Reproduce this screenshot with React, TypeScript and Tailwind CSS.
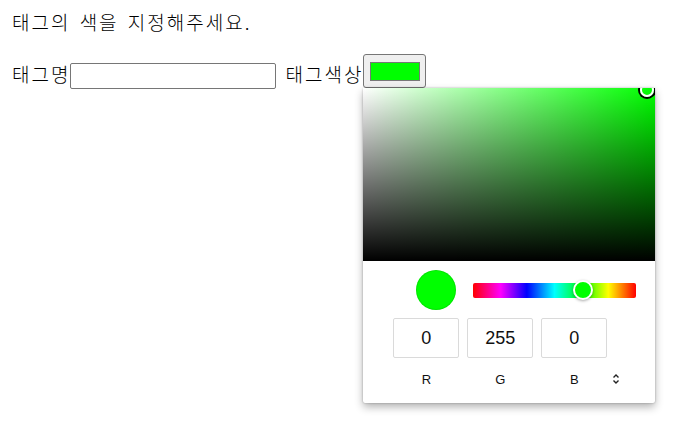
import React from "react";

const ColorPicker: React.FC = () => {
  return (
    <div className="absolute left-0 top-full z-10 w-[292px] rounded-[2px] bg-white shadow-[0_0_2px_rgba(0,0,0,0.3),0_4px_8px_rgba(0,0,0,0.3)] font-['Liberation_Sans',Arial,sans-serif] tracking-normal [word-spacing:normal]">
      {/* saturation area */}
      <div className="relative h-[173px] overflow-hidden bg-[#00ff00]">
        <div className="absolute inset-0 bg-gradient-to-r from-white to-transparent" />
        <div className="absolute inset-0 bg-gradient-to-b from-transparent to-black" />
        <div className="absolute right-[1px] top-[-5px] h-[14px] w-[14px] rounded-full border-[2px] border-white shadow-[0_0_0_2px_#000]" />
      </div>

      {/* body */}
      <div className="pb-[16px] pt-[9px]">
        <div className="flex items-center pl-[53px] pr-[19px]">
          <div className="h-[40px] w-[40px] rounded-full bg-[#00ff00] shadow-[inset_0_0_0_1px_rgba(0,0,0,0.1)]" />
          <div className="relative ml-[17px] h-[15px] flex-1 rounded-[2px] bg-[linear-gradient(to_right,#f00_0%,#f0f_17%,#00f_33%,#0ff_50%,#0f0_67%,#ff0_83%,#f00_100%)]">
            <div className="absolute left-[67%] top-1/2 h-[20px] w-[20px] -translate-x-1/2 -translate-y-1/2 rounded-full border-[2px] border-white bg-[#00ff00] shadow-[0_1px_3px_rgba(0,0,0,0.35)]" />
          </div>
        </div>

        <div className="mt-[8px] flex pl-[30px]">
          {["0", "255", "0"].map((v, i) => (
            <div key={i} className="mr-[8px] w-[66px]">
              <div className="flex h-[40px] items-center justify-center rounded-[2px] border border-[#dadada] text-[18px] text-[#111]">
                {v}
              </div>
              <div className="mt-[14px] text-center text-[13px] leading-[15px] text-[#111]">
                {["R", "G", "B"][i]}
              </div>
            </div>
          ))}
          <div className="flex items-end pb-[1px]">
            <svg width="10" height="14" viewBox="0 0 10 14" className="ml-[-4px]">
              <path d="M2.5 5.5 L5 3 L7.5 5.5" fill="none" stroke="#222" strokeWidth="1.4" />
              <path d="M2.5 8.5 L5 11 L7.5 8.5" fill="none" stroke="#222" strokeWidth="1.4" />
            </svg>
          </div>
        </div>
      </div>
    </div>
  );
};

const App: React.FC = () => {
  return (
    <div className="min-h-screen bg-white text-[19px] font-light tracking-[2px] text-black font-['Noto_Sans_CJK_KR','Noto_Sans',sans-serif]">
      <p className="pl-[12px] pt-[8px] leading-[28px] [word-spacing:3px]">태그의 색을 지정해주세요.</p>

      <div className="mt-[18px] flex items-end pl-[12px]">
        <span className="mb-[2px] leading-[26px]">태그명</span>
        <input
          type="text"
          className="h-[26px] w-[206px] rounded-[2px] border border-[#767676] bg-white px-[2px] outline-none"
        />
        <span className="mb-[2px] ml-[9px] leading-[26px]">태그색상</span>
        <div className="relative mb-[1px]">
          <button className="flex h-[34px] w-[63px] items-center justify-center rounded-[3px] border border-[#767676] bg-[#efefef]">
            <span className="block h-[19px] w-[50px] border border-[#777] bg-[#00ff00]" />
          </button>
          <ColorPicker />
        </div>
      </div>
    </div>
  );
};

export default App;
